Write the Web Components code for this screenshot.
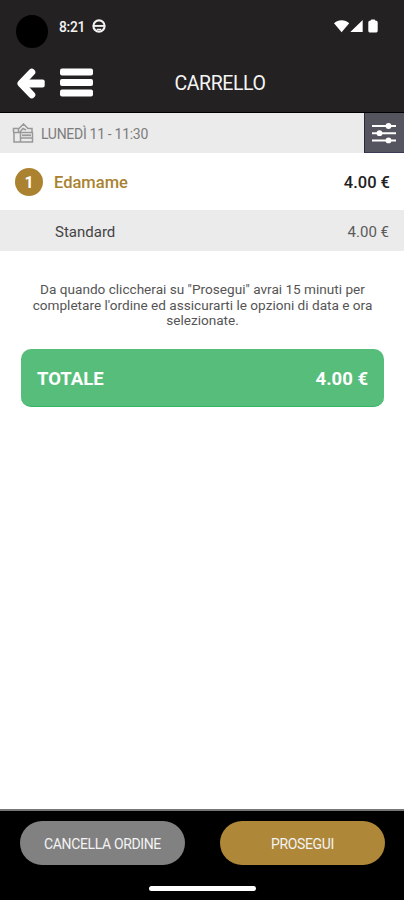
<!DOCTYPE html>
<html lang="it">
<head>
<meta charset="utf-8" />
<meta name="viewport" content="width=device-width, initial-scale=1" />
<title>Carrello</title>
<style>
  html, body {
    margin: 0;
    height: 100%;
    background: #fff;
    font-family: Roboto, "Liberation Sans", sans-serif;
  }
</style>
</head>
<body>
<cart-page>
  <status-bar slot="top" time="8:21"></status-bar>
  <nav-header slot="top">CARRELLO</nav-header>
  <slot-bar>LUNEDÌ 11 - 11:30</slot-bar>
  <cart-item count="1" price="4.00 €">Edamame</cart-item>
  <cart-option price="4.00 €">Standard</cart-option>
  <cart-note>Da quando cliccherai su "Prosegui" avrai 15 minuti per completare l'ordine ed assicurarti le opzioni di data e ora selezionate.</cart-note>
  <cart-total price="4.00 €">TOTALE</cart-total>
  <action-bar slot="bottom">
    <pill-button>CANCELLA ORDINE</pill-button>
    <pill-button primary>PROSEGUI</pill-button>
  </action-bar>
</cart-page>

<script>
(function() {
  // registers an element whose shadow root is cloned from the given markup,
  // attributes listed in attrs are written into the node with the same id
  function define(name, html, attrs = []) {
    const template = document.createElement("template");
    template.innerHTML = html;

    class Component extends HTMLElement {
      constructor() {
        super();
        this._shadowRoot = this.attachShadow({ mode: "open" });
        this._shadowRoot.appendChild(template.content.cloneNode(true));
      }

      static get observedAttributes() {
        return attrs;
      }

      attributeChangedCallback(attr, oldVal, newVal) {
        this._shadowRoot.getElementById(attr).textContent = newVal;
      }
    }

    window.customElements.define(name, Component);
  }

  define("cart-page", `
    <style>
      :host {
        display: flex;
        flex-direction: column;
        height: 900px;
      }
      header, footer {
        flex: none;
      }
      header {
        background: #232122;
        border-bottom: 1px solid #000;
      }
      main {
        flex: 1;
      }
    </style>
    <header><slot name="top"></slot></header>
    <main><slot></slot></main>
    <footer><slot name="bottom"></slot></footer>
  `);

  define("status-bar", `
    <style>
      :host {
        display: flex;
        align-items: flex-start;
        height: 53px;
        box-sizing: border-box;
        padding: 15px 25px 0 16px;
        color: #f4f4f4;
      }
      .camera {
        width: 32px;
        height: 33px;
        border-radius: 50%;
        background: #000;
      }
      #time {
        margin: 3px 0 0 11px;
        width: 33px;
        font-size: 13.8px;
        line-height: 18px;
        letter-spacing: -0.3px;
        font-weight: 500;
      }
      .app {
        margin-top: 4px;
      }
      .signals {
        margin: 4px 0 0 auto;
      }
    </style>
    <span class="camera"></span>
    <span id="time"></span>
    <svg class="app" width="14" height="14" viewBox="0 0 14 14" fill="none" stroke="#f2f2f2">
      <circle cx="7" cy="7" r="5.6" stroke-width="2.1" />
      <path d="M2 6.900h10" stroke-width="1.900" />
      <path d="M4.800 10.400h4.400" stroke-width="1.300" />
    </svg>
    <svg class="signals" width="45" height="15" viewBox="0 0 45 15" fill="#fff">
      <path d="M0 4.300C4 .2 11.200 .2 15.200 4.300L7.600 13.300z" />
      <path d="M28.700 1v12H16.300z" />
      <path d="M37.300 .5h3.400l.6 1c1.500 0 2.400.8 2.400 2v8.300c0 1.100-.8 1.800-1.900 1.800h-5.600c-1.100 0-1.900-.7-1.900-1.800V3.500c0-1.200.9-2 2.400-2z" />
    </svg>
  `, ["time"]);

  define("nav-header", `
    <style>
      :host {
        display: grid;
        grid-template-columns: 94px 1fr 58px;
        align-items: center;
        height: 59px;
        color: #f5f5f5;
      }
      nav {
        display: flex;
        align-items: center;
        gap: 14px;
        padding-left: 16px;
      }
      h1 {
        margin: 2px 0 0;
        font-size: 19.5px;
        line-height: 24px;
        font-weight: 400;
        letter-spacing: -0.4px;
        text-align: center;
      }
      svg {
        display: block;
      }
    </style>
    <nav>
      <svg width="30" height="32" viewBox="0 0 30 32">
        <path d="M15.800 5.200L5 16.500L15.800 27.800" fill="none" stroke="#fff" stroke-width="7" stroke-linecap="round" stroke-linejoin="round" />
        <rect x="5" y="12.500" width="23.700" height="8" rx="2" fill="#fff" />
      </svg>
      <svg width="34" height="30" viewBox="0 0 34 30" fill="#fff">
        <rect y=".5" width="33" height="7" rx="2" />
        <rect y="11" width="33" height="7" rx="2" />
        <rect y="21.500" width="33" height="7" rx="2" />
      </svg>
    </nav>
    <h1><slot></slot></h1>
  `);

  define("slot-bar", `
    <style>
      :host {
        display: flex;
        align-items: center;
        height: 40px;
        background: #ebebeb;
        color: #7c7c7c;
        font-size: 14px;
      }
      .basket {
        margin: 0 7px 0 12px;
      }
      .filter {
        display: flex;
        align-items: center;
        justify-content: center;
        width: 40px;
        height: 40px;
        box-sizing: border-box;
        margin-left: auto;
        padding-right: 2px;
        background: #55555f;
        border-left: 1px solid #292838;
        border-bottom: 1px solid #3b3a55;
      }
      .when {
        margin-top: 2px;
        letter-spacing: -0.3px;
      }
    </style>
    <svg class="basket" width="22" height="21" viewBox="0 0 22 21" fill="none" stroke="#999" stroke-width="1.500">
      <path d="M1 9.500h20M2 9.500v9.500h18.500v-9.500M8.500 9.500v9.500M8.500 15h12" />
      <path d="M1.500 9V5.500h5V9M7 5.500L11.500 1l4.500 4.500M8 9l3-3.500 3 1.500M15.500 5.500h4.500V9" />
      <path d="M10 12.300h9" stroke-width="1.800" />
    </svg>
    <span class="when"><slot></slot></span>
    <span class="filter">
      <svg width="26" height="22" viewBox="0 0 26 22" fill="#fff">
        <path d="M1 4h24M1 11.200h24M1 18.400h24" stroke="#fff" stroke-width="2" />
        <circle cx="17.500" cy="4" r="2.900" />
        <circle cx="8.500" cy="11.200" r="2.900" />
        <circle cx="17.500" cy="18.400" r="2.900" />
      </svg>
    </span>
  `);

  define("cart-item", `
    <style>
      :host {
        display: flex;
        align-items: center;
        height: 57px;
        padding: 0 14px 0 15px;
        font-size: 16.500px;
        font-weight: 500;
        color: #a9822f;
      }
      #count {
        width: 28px;
        height: 28px;
        margin-right: 11px;
        border-radius: 50%;
        background: #ab8230;
        color: #fff;
        font-size: 16px;
        font-weight: 700;
        line-height: 29px;
        text-align: center;
      }
      .name {
        margin-top: 2px;
      }
      #price {
        margin: 2px 0 0 auto;
        color: #222;
      }
    </style>
    <span id="count"></span>
    <span class="name"><slot></slot></span>
    <span id="price"></span>
  `, ["count", "price"]);

  define("cart-option", `
    <style>
      :host {
        display: flex;
        align-items: center;
        justify-content: space-between;
        height: 39px;
        padding: 2px 15px 0 55px;
        background: #ebebeb;
        color: #444;
        font-size: 15px;
      }
      #price {
        color: #5a5a5a;
      }
    </style>
    <span class="name"><slot></slot></span>
    <span id="price"></span>
  `, ["price"]);

  define("cart-note", `
    <style>
      :host {
        display: block;
        margin: 31px 23px 0 24px;
        color: #555;
        font-size: 13.600px;
        line-height: 15.700px;
        text-align: center;
      }
    </style>
    <slot></slot>
  `);

  define("cart-total", `
    <style>
      :host {
        display: flex;
        align-items: center;
        justify-content: space-between;
        height: 58px;
        box-sizing: border-box;
        margin: 20px 20px 0 21px;
        padding: 2px 16px 0;
        border-radius: 10px;
        border-bottom: 1px solid #35b566;
        background: #57bd7a;
        color: #fff;
        font-size: 18.500px;
        font-weight: 700;
      }
    </style>
    <span class="label"><slot></slot></span>
    <span id="price"></span>
  `, ["price"]);

  define("action-bar", `
    <style>
      :host {
        display: block;
        height: 91px;
        box-sizing: border-box;
        border-top: 2px solid #777;
        background: #000;
      }
      .buttons {
        display: flex;
        justify-content: space-between;
        padding: 10px 19px 0 20px;
      }
      .home {
        width: 107px;
        height: 5px;
        margin: 21px 0 0 149px;
        border-radius: 3px;
        background: #fff;
      }
    </style>
    <div class="buttons"><slot></slot></div>
    <div class="home"></div>
  `);

  define("pill-button", `
    <style>
      :host {
        display: block;
        width: 165px;
        height: 44px;
        border-radius: 22px;
        background: #818181;
        color: #f3f3f3;
        font-size: 14px;
        line-height: 46px;
        letter-spacing: -0.360px;
        text-align: center;
      }
      :host([primary]) {
        background: #ae8738;
      }
    </style>
    <slot></slot>
  `);
})();
</script>
</body>
</html>
